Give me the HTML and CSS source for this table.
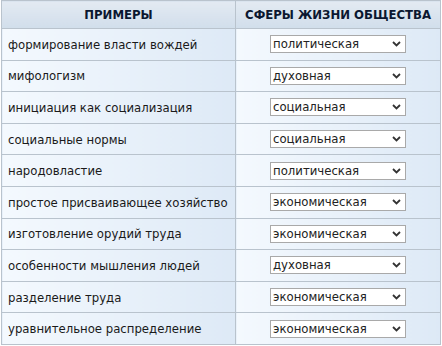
FILE: index.html
```html
<!DOCTYPE html>
<html lang="ru">
<head>
<meta charset="utf-8">
<link rel="stylesheet" href="styles.css">
</head>
<body>
<table class="grid">
  <thead>
    <tr><th class="c1">ПРИМЕРЫ</th><th class="c2">СФЕРЫ ЖИЗНИ ОБЩЕСТВА</th></tr>
  </thead>
  <tbody>
    <tr><td class="c1">формирование власти вождей</td><td class="c2"><span class="sel"><select><option>политическая</option></select><svg class="chev" width="9" height="6" viewBox="0 0 9 6"><path d="M1 1 L4.5 4.5 L8 1" fill="none" stroke="#333" stroke-width="1.8"/></svg></span></td></tr>
    <tr><td class="c1">мифологизм</td><td class="c2"><span class="sel"><select><option>духовная</option></select><svg class="chev" width="9" height="6" viewBox="0 0 9 6"><path d="M1 1 L4.5 4.5 L8 1" fill="none" stroke="#333" stroke-width="1.8"/></svg></span></td></tr>
    <tr><td class="c1">инициация как социализация</td><td class="c2"><span class="sel"><select><option>социальная</option></select><svg class="chev" width="9" height="6" viewBox="0 0 9 6"><path d="M1 1 L4.5 4.5 L8 1" fill="none" stroke="#333" stroke-width="1.8"/></svg></span></td></tr>
    <tr><td class="c1">социальные нормы</td><td class="c2"><span class="sel"><select><option>социальная</option></select><svg class="chev" width="9" height="6" viewBox="0 0 9 6"><path d="M1 1 L4.5 4.5 L8 1" fill="none" stroke="#333" stroke-width="1.8"/></svg></span></td></tr>
    <tr><td class="c1">народовластие</td><td class="c2"><span class="sel"><select><option>политическая</option></select><svg class="chev" width="9" height="6" viewBox="0 0 9 6"><path d="M1 1 L4.5 4.5 L8 1" fill="none" stroke="#333" stroke-width="1.8"/></svg></span></td></tr>
    <tr><td class="c1">простое присваивающее хозяйство</td><td class="c2"><span class="sel"><select><option>экономическая</option></select><svg class="chev" width="9" height="6" viewBox="0 0 9 6"><path d="M1 1 L4.5 4.5 L8 1" fill="none" stroke="#333" stroke-width="1.8"/></svg></span></td></tr>
    <tr><td class="c1">изготовление орудий труда</td><td class="c2"><span class="sel"><select><option>экономическая</option></select><svg class="chev" width="9" height="6" viewBox="0 0 9 6"><path d="M1 1 L4.5 4.5 L8 1" fill="none" stroke="#333" stroke-width="1.8"/></svg></span></td></tr>
    <tr><td class="c1">особенности мышления людей</td><td class="c2"><span class="sel"><select><option>духовная</option></select><svg class="chev" width="9" height="6" viewBox="0 0 9 6"><path d="M1 1 L4.5 4.5 L8 1" fill="none" stroke="#333" stroke-width="1.8"/></svg></span></td></tr>
    <tr><td class="c1">разделение труда</td><td class="c2"><span class="sel"><select><option>экономическая</option></select><svg class="chev" width="9" height="6" viewBox="0 0 9 6"><path d="M1 1 L4.5 4.5 L8 1" fill="none" stroke="#333" stroke-width="1.8"/></svg></span></td></tr>
    <tr><td class="c1">уравнительное распределение</td><td class="c2"><span class="sel"><select><option>экономическая</option></select><svg class="chev" width="9" height="6" viewBox="0 0 9 6"><path d="M1 1 L4.5 4.5 L8 1" fill="none" stroke="#333" stroke-width="1.8"/></svg></span></td></tr>
  </tbody>
</table>
</body>
</html>
```

FILE: styles.css
```css
html, body {
  margin: 0;
  padding: 0;
  background: #ffffff;
}
body {
  padding: 0 2px 0 1px;
  font-family: "DejaVu Sans Condensed", "DejaVu Sans", sans-serif;
  color: #1a1a1a;
}
.grid {
  border-collapse: collapse;
  width: 440px;
  table-layout: fixed;
}
.grid th, .grid td {
  border: 1px solid #b9c3cd;
  padding: 0;
}
.grid th {
  height: 27px;
  font-size: 13px;
  font-weight: bold;
  color: #0b1730;
  text-align: center;
  background: linear-gradient(to bottom, #e3eaf2, #d1deeb);
}
.grid .c1 { width: 233px; }
.grid td {
  height: 30.6px;
  font-size: 13px;
  background: linear-gradient(to right, #f4f9fe, #dde9f6);
}
.grid td.c1 {
  padding-left: 6px;
  white-space: nowrap;
}
.grid td.c2 {
  text-align: center;
}
.sel {
  position: relative;
  display: inline-block;
  vertical-align: middle;
}
.sel select {
  appearance: none;
  -webkit-appearance: none;
  width: 136px;
  height: 18px;
  margin: 0;
  padding: 0 0 0 2px;
  border: 1px solid #a9a9a9;
  border-radius: 0;
  background: #ffffff;
  font-family: "DejaVu Sans Condensed", "DejaVu Sans", sans-serif;
  font-size: 13px;
  line-height: 16px;
  color: #222;
  text-align: left;
}
.chev {
  position: absolute;
  right: 5px;
  top: 6px;
  pointer-events: none;
}
```
